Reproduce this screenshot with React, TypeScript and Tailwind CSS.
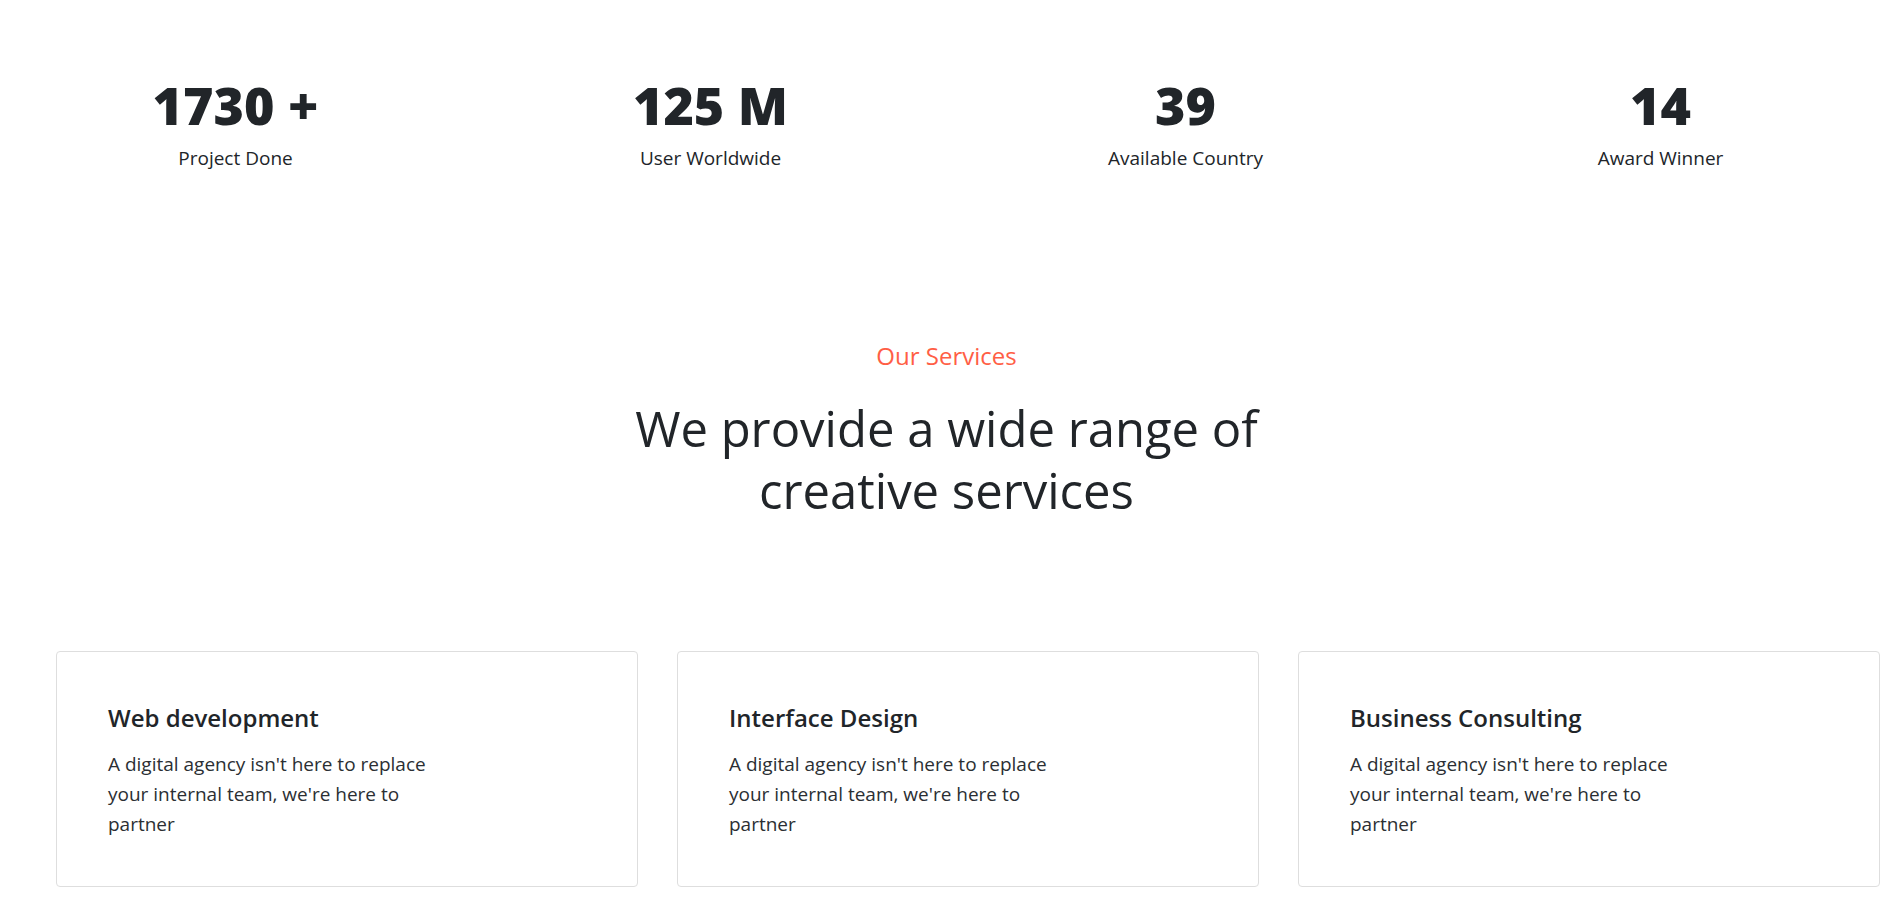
import React from 'react';

const stats = [
  { value: '1730 +', label: 'Project Done' },
  { value: '125 M', label: 'User Worldwide' },
  { value: '39', label: 'Available Country' },
  { value: '14', label: 'Award Winner' },
];

const services = [
  { title: 'Web development' },
  { title: 'Interface Design' },
  { title: 'Business Consulting' },
];

const body = "A digital agency isn't here to replace your internal team, we're here to partner";

const App: React.FC = () => {
  return (
    <div className="min-h-screen overflow-x-hidden bg-white font-['Open_Sans',sans-serif] text-[#212529]">
      {/* Counters */}
      <section className="-ml-[2px] grid grid-cols-[repeat(4,475px)] pt-[74px]">
        {stats.map((s) => (
          <div key={s.label} className="text-center">
            <h2 className="text-[52px] font-extrabold leading-[1.2]">{s.value}</h2>
            <p className="mt-[8px] text-[19px] leading-[1.5]">{s.label}</p>
          </div>
        ))}
      </section>

      {/* Services header */}
      <section className="mt-[165px] text-center">
        <p className="text-[24px] font-medium leading-[1.5] text-[#ff5e45]">Our Services</p>
        <h2 className="mx-auto mt-[23px] max-w-[760px] text-[49px] font-medium leading-[62px]">
          We provide a wide range of
          <br />
          creative services
        </h2>
      </section>

      {/* Service cards */}
      <section className="grid grid-cols-3 gap-[39px] pb-[40px] pl-[56px] pr-[13px] pt-[130px]">
        {services.map((s) => (
          <article key={s.title} className="rounded-[4px] border border-[#dedede] bg-white pb-[47px] pl-[51px] pr-[40px] pt-[52px]">
            <h3 className="text-[24px] font-semibold leading-[1.2]">{s.title}</h3>
            <p className="mt-[16px] max-w-[345px] text-[19px] leading-[30px] text-[#2b2f33]">{body}</p>
          </article>
        ))}
      </section>
    </div>
  );
};

export default App;
